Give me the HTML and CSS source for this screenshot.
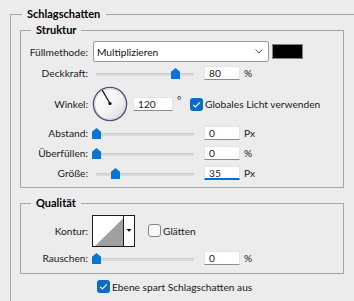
FILE: index.html
```html
<!DOCTYPE html>
<html lang="de">
<head>
<meta charset="utf-8">
<title>Schlagschatten</title>
<link rel="stylesheet" href="styles.css">
</head>
<body>
<fieldset class="outer">
  <legend class="outer-legend">Schlagschatten</legend>
  <div class="outer-body">
    <fieldset class="group struktur">
      <legend class="group-legend">Struktur</legend>
      <div class="row r-fill">
        <span class="lbl">Füllmethode:</span>
        <div class="select">
          <span>Multiplizieren</span>
          <svg class="chev" width="8" height="5" viewBox="0 0 8 5"><path d="M0.5 0.5 L4 4 L7.5 0.5" fill="none" stroke="#5a5a5a" stroke-width="1"/></svg>
        </div>
        <div class="swatch"></div>
      </div>
      <div class="row r-op">
        <span class="lbl">Deckkraft:</span>
        <div class="slider"><div class="track"></div><svg class="thumb" style="left:79px" width="9" height="11" viewBox="0 0 9 11"><path d="M0 3.8 L4.5 0 L9 3.8 V11 H0 Z" fill="#0a74d6"/></svg></div>
        <div class="num">80</div><span class="unit">%</span>
      </div>
      <div class="row r-angle">
        <span class="lbl">Winkel:</span>
        <svg class="dial" width="36" height="36" viewBox="0 0 36 36">
          <defs>
            <linearGradient id="dg" x1="0" y1="0" x2="1" y2="1">
              <stop offset="0" stop-color="#ffffff"/>
              <stop offset="0.55" stop-color="#f4f4f4"/>
              <stop offset="1" stop-color="#d6d6d6"/>
            </linearGradient>
          </defs>
          <circle cx="18" cy="18" r="16.6" fill="url(#dg)" stroke="#4b5674" stroke-width="1.4"/>
          <circle cx="18" cy="18" r="15.4" fill="none" stroke="#c9ccd6" stroke-width="0.8"/>
          <line x1="18" y1="17.5" x2="10.2" y2="4.1" stroke="#000" stroke-width="1.1"/>
          <circle cx="18" cy="17.5" r="1.6" fill="#000"/>
        </svg>
        <div class="num wide">120</div><span class="deg">°</span>
        <span class="cb on"><svg width="13" height="13" viewBox="0 0 13 13"><path d="M3.2 6.8 L5.4 9 L9.8 4.4" fill="none" stroke="#fff" stroke-width="1.2"/></svg></span>
        <span class="cb-text">Globales Licht verwenden</span>
      </div>
      <div class="row r-s first">
        <span class="lbl">Abstand:</span>
        <div class="slider"><div class="track"></div><svg class="thumb" style="left:0px" width="9" height="11" viewBox="0 0 9 11"><path d="M0 3.8 L4.5 0 L9 3.8 V11 H0 Z" fill="#0a74d6"/></svg></div>
        <div class="num">0</div><span class="unit">Px</span>
      </div>
      <div class="row r-s">
        <span class="lbl">Überfüllen:</span>
        <div class="slider"><div class="track"></div><svg class="thumb" style="left:0px" width="9" height="11" viewBox="0 0 9 11"><path d="M0 3.8 L4.5 0 L9 3.8 V11 H0 Z" fill="#0a74d6"/></svg></div>
        <div class="num">0</div><span class="unit">%</span>
      </div>
      <div class="row r-s">
        <span class="lbl">Größe:</span>
        <div class="slider"><div class="track"></div><svg class="thumb" style="left:19px" width="9" height="11" viewBox="0 0 9 11"><path d="M0 3.8 L4.5 0 L9 3.8 V11 H0 Z" fill="#0a74d6"/></svg></div>
        <div class="num focus">35</div><span class="unit">Px</span>
      </div>
    </fieldset>

    <fieldset class="group qualitaet">
      <legend class="group-legend">Qualität</legend>
      <div class="row r-kontur">
        <span class="lbl">Kontur:</span>
        <svg class="contour" width="43" height="32" viewBox="0 0 43 32">
          <rect x="0.5" y="0.5" width="42" height="31" fill="#fff" stroke="#1a1a1a"/>
          <path d="M3 31 L31 3.5 L31 31 Z" fill="#a0a0a0"/>
          <line x1="31.5" y1="0.5" x2="31.5" y2="31.5" stroke="#1a1a1a"/>
          <path d="M34.5 14 L39.5 14 L37 16.8 Z" fill="#000"/>
        </svg>
        <span class="cb off"></span>
        <span class="cb-text">Glätten</span>
      </div>
      <div class="row r-noise">
        <span class="lbl">Rauschen:</span>
        <div class="slider"><div class="track"></div><svg class="thumb" style="left:0px" width="9" height="11" viewBox="0 0 9 11"><path d="M0 3.8 L4.5 0 L9 3.8 V11 H0 Z" fill="#0a74d6"/></svg></div>
        <div class="num">0</div><span class="unit">%</span>
      </div>
    </fieldset>

    <div class="row r-knock">
      <span class="cb on"><svg width="13" height="13" viewBox="0 0 13 13"><path d="M3.2 6.8 L5.4 9 L9.8 4.4" fill="none" stroke="#fff" stroke-width="1.2"/></svg></span>
      <span class="cb-text">Ebene spart Schlagschatten aus</span>
    </div>
  </div>
</fieldset>
</body>
</html>
```

FILE: styles.css
```css
html, body {
  margin: 0;
  padding: 0;
  overflow: hidden;
}
body {
  width: 354px;
  height: 301px;
  background: #ececec;
  font-family: Lato, "Noto Sans", sans-serif;
  font-size: 10.2px;
  color: #1a1a1a;
}
fieldset {
  margin: 0;
  padding: 0;
  min-width: 0;
  border: 1px solid #a6a6a6;
}
legend {
  font-size: 11px;
  font-weight: 700;
  color: #000;
  line-height: 16px;
  height: 16px;
  padding: 0 5px;
}
.outer {
  margin: 6px 0 0 10px;
  width: 370px;
  height: 420px;
  box-sizing: border-box;
}
.outer-legend {
  margin-left: 11px;
  padding: 0 6px 0 5px;
}
.outer-body {
  padding-left: 9px;
}
.group {
  width: 324px;
  box-sizing: border-box;
}
.group-legend {
  margin-left: 10px;
}
.struktur {
  padding: 3px 0 4px;
}
.qualitaet {
  margin-top: 7px;
  padding: 4px 0 5px;
}
.row {
  display: flex;
  align-items: center;
  white-space: nowrap;
}
.lbl {
  flex: none;
  width: 67px;
  margin-right: 4px;
  text-align: right;
}
.r-fill { height: 21px; }
.r-op { height: 20px; margin-top: 1px; }
.r-angle { height: 36px; margin-top: 3px; }
.r-s { height: 20px; }
.r-s.first { margin-top: 1px; }
.r-kontur { height: 31px; }
.r-noise { height: 20px; margin-top: 2px; }
.r-knock {
  height: 13px;
  margin-top: 6px;
  padding-left: 77px;
}
.select {
  flex: none;
  box-sizing: border-box;
  width: 176px;
  height: 21px;
  margin-left: 1px;
  padding: 0 5px 0 3px;
  display: flex;
  align-items: center;
  justify-content: space-between;
  background: #fff;
  border: 1px solid #9a9a9a;
  border-radius: 2px;
  color: #111;
}
.swatch {
  flex: none;
  box-sizing: border-box;
  width: 31px;
  height: 15px;
  margin-left: 3px;
  background: #000;
  border: 1px solid #808080;
}
.slider {
  position: relative;
  flex: none;
  width: 107px;
  height: 11px;
  margin-right: 5px;
}
.track {
  box-sizing: border-box;
  width: 98px;
  height: 3px;
  margin: 5px 0 0 4px;
  background: #dadada;
  border-top: 1px solid #cdcdcd;
}
.thumb {
  position: absolute;
  top: 0;
  display: block;
}
.num {
  flex: none;
  box-sizing: border-box;
  width: 36px;
  height: 14px;
  margin-right: 4px;
  padding-left: 4px;
  line-height: 13px;
  background: #fff;
  border: 1px solid #e4e4e4;
  border-bottom-color: #8c8c8c;
  color: #1a1a1a;
}
.num.wide { width: 40px; margin-right: 0; }
.num.focus {
  border-bottom: 2px solid #0a6cc8;
  line-height: 12px;
}
.dial {
  flex: none;
  display: block;
  margin-right: 5px;
}
.deg {
  flex: none;
  width: 13px;
  margin-left: 4px;
  align-self: flex-start;
  margin-top: 8px;
}
.cb {
  flex: none;
  box-sizing: border-box;
  width: 13px;
  height: 13px;
  border-radius: 3px;
  margin-right: 2px;
}
.cb svg { display: block; }
.cb.on { background: #0b6bc6; }
.cb.off {
  margin-left: 13px;
  background: #f7f7f7;
  border: 1px solid #858585;
}
.contour {
  flex: none;
  display: block;
}
```
